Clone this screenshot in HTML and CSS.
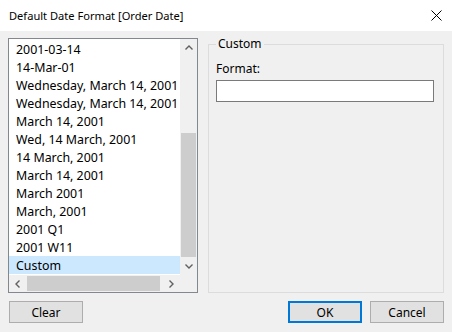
FILE: index.html
```html
<!DOCTYPE html>
<html lang="en">
<head>
    <meta charset="UTF-8">
    <title>Default Date Format [Order Date]</title>
    <link rel="stylesheet" href="styles.css">
</head>
<body>
    <div class="dialog">
        <div class="titlebar">
            <span class="title">Default Date Format [Order Date]</span>
            <svg class="close" width="11" height="11" viewBox="0 0 11 11">
                <path d="M0.5 0.5 L10.5 10.5 M10.5 0.5 L0.5 10.5" stroke="#000" stroke-width="1" fill="none"/>
            </svg>
        </div>

        <div class="main">
            <div class="listbox">
                <ul class="items">
                    <li>2001-03-14</li>
                    <li>14-Mar-01</li>
                    <li>Wednesday, March 14, 2001</li>
                    <li>Wednesday, March 14, 2001</li>
                    <li>March 14, 2001</li>
                    <li>Wed, 14 March, 2001</li>
                    <li>14 March, 2001</li>
                    <li>March 14, 2001</li>
                    <li>March 2001</li>
                    <li>March, 2001</li>
                    <li>2001 Q1</li>
                    <li>2001 W11</li>
                    <li class="selected">Custom</li>
                </ul>
                <div class="vscroll">
                    <span class="arrow">
                        <svg width="8" height="5" viewBox="0 0 8 5"><path d="M0.5 4.5 L4 1 L7.5 4.5" stroke="#606060" stroke-width="1.4" fill="none"/></svg>
                    </span>
                    <div class="track">
                        <div class="vthumb"></div>
                    </div>
                    <span class="arrow">
                        <svg width="8" height="5" viewBox="0 0 8 5"><path d="M0.5 0.5 L4 4 L7.5 0.5" stroke="#606060" stroke-width="1.4" fill="none"/></svg>
                    </span>
                </div>
                <div class="hscroll">
                    <span class="arrow">
                        <svg width="5" height="8" viewBox="0 0 5 8"><path d="M4.5 0.5 L1 4 L4.5 7.5" stroke="#606060" stroke-width="1.4" fill="none"/></svg>
                    </span>
                    <div class="track">
                        <div class="hthumb"></div>
                    </div>
                    <span class="arrow">
                        <svg width="5" height="8" viewBox="0 0 5 8"><path d="M0.5 0.5 L4 4 L0.5 7.5" stroke="#606060" stroke-width="1.4" fill="none"/></svg>
                    </span>
                </div>
                <div class="corner"></div>
            </div>

            <fieldset class="group">
                <legend>Custom</legend>
                <label class="label" for="format">Format:</label>
                <input type="text" id="format" class="format">
            </fieldset>
        </div>

        <div class="actions">
            <button class="button">Clear</button>
            <span class="spacer"></span>
            <button class="button default">OK</button>
            <button class="button">Cancel</button>
        </div>
    </div>
</body>
</html>
```

FILE: styles.css
```css
body {
    margin: 0;
    font-family: "Noto Sans", "DejaVu Sans", sans-serif;
    font-size: 12px;
    color: #000;
    background: #f0f0f0;
}

.dialog {
    width: 452px;
    height: 332px;
    background: #f0f0f0;
}

.titlebar {
    height: 31px;
    background: #fff;
    display: flex;
    align-items: center;
    justify-content: space-between;
    padding: 0 10px 0 9px;
}

.title {
    font-size: 11.1px;
}

.close {
    display: block;
}

.main {
    display: flex;
    gap: 10px;
    padding: 7px 8px 0 8px;
    height: 255px;
}

.listbox {
    width: 190px;
    height: 255px;
    box-sizing: border-box;
    border: 1px solid #828790;
    background: #fff;
    display: grid;
    grid-template-columns: 171px 17px;
    grid-template-rows: 236px 17px;
}

.items {
    list-style: none;
    margin: 0;
    padding: 1px 0 0 0;
    overflow: hidden;
    font-size: 12.4px;
}

.items li {
    height: 18px;
    line-height: 19px;
    padding-left: 7px;
    white-space: nowrap;
}

.items li.selected {
    background: #cce8ff;
}

.vscroll {
    background: #f0f0f0;
    display: flex;
    flex-direction: column;
}

.vscroll .arrow {
    height: 17px;
    display: flex;
    align-items: center;
    justify-content: center;
}

.vscroll .track {
    flex: 1;
}

.vthumb {
    margin: 77px 1px 0 1px;
    height: 124px;
    background: #cdcdcd;
}

.hscroll {
    background: #f0f0f0;
    display: flex;
}

.hscroll .arrow {
    width: 17px;
    display: flex;
    align-items: center;
    justify-content: center;
}

.hscroll .track {
    flex: 1;
}

.hthumb {
    margin: 1px 0 0 1px;
    width: 133px;
    height: 15px;
    background: #cdcdcd;
}

.corner {
    background: #f0f0f0;
}

.group {
    margin: 0;
    width: 236px;
    height: 255px;
    box-sizing: border-box;
    padding: 0 9px 0 7px;
    border: 1px solid #dcdcdc;
}

.group legend {
    padding: 0 2px;
    line-height: 12px;
}

.label {
    display: block;
    margin-top: 10px;
    line-height: 17px;
}

.format {
    display: block;
    margin: 3px 0 0 0;
    width: 218px;
    height: 22px;
    box-sizing: border-box;
    border: 1px solid #7a7a7a;
    background: #fff;
    padding: 0 3px;
    font: inherit;
}

.actions {
    display: flex;
    gap: 8px;
    padding: 8px 8px 0 9px;
}

.spacer {
    flex: 1;
}

.button {
    width: 74px;
    height: 22px;
    box-sizing: border-box;
    border: 1px solid #adadad;
    background: #e1e1e1;
    font: inherit;
    color: #000;
    padding: 0;
}

.button.default {
    border-color: #0078d7;
    box-shadow: inset 0 0 0 1px #0078d7;
}
```
